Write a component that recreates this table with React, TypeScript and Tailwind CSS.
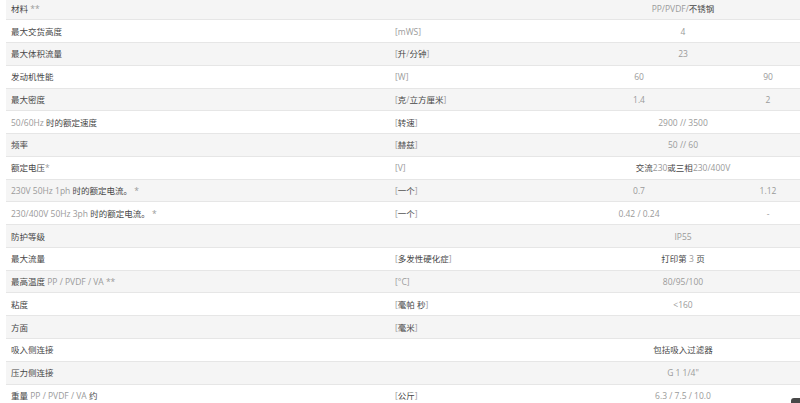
import React from "react";

type Row = { label: string; unit: string; a: string; b?: string; span?: boolean };

const rows: Row[] = [
  { label: "材料 **", unit: "", a: "PP/PVDF/不锈钢", span: true },
  { label: "最大交货高度", unit: "[mWS]", a: "4", span: true },
  { label: "最大体积流量", unit: "[升/分钟]", a: "23", span: true },
  { label: "发动机性能", unit: "[W]", a: "60", b: "90" },
  { label: "最大密度", unit: "[克/立方厘米]", a: "1.4", b: "2" },
  { label: "50/60Hz 时的额定速度", unit: "[转速]", a: "2900 // 3500", span: true },
  { label: "频率", unit: "[赫兹]", a: "50 // 60", span: true },
  { label: "额定电压*", unit: "[V]", a: "交流230或三相230/400V", span: true },
  { label: "230V 50Hz 1ph 时的额定电流。 *", unit: "[一个]", a: "0.7", b: "1.12" },
  { label: "230/400V 50Hz 3ph 时的额定电流。 *", unit: "[一个]", a: "0.42 / 0.24", b: "-" },
  { label: "防护等级", unit: "", a: "IP55", span: true },
  { label: "最大流量", unit: "[多发性硬化症]", a: "打印第 3 页", span: true },
  { label: "最高温度 PP / PVDF / VA **", unit: "[°C]", a: "80/95/100", span: true },
  { label: "粘度", unit: "[毫帕 秒]", a: "<160", span: true },
  { label: "方面", unit: "[毫米]", a: "", span: true },
  { label: "吸入侧连接", unit: "", a: "包括吸入过滤器", span: true },
  { label: "压力侧连接", unit: "", a: "G 1 1/4\"", span: true },
  { label: "重量 PP / PVDF / VA 约", unit: "[公斤]", a: "6.3 / 7.5 / 10.0", span: true },
];

function Mixed({ text }: { text: string }) {
  const parts: { s: string; cjk: boolean }[] = [];
  const re = /[\u3000-\u303f\u4e00-\u9fff\uff00-\uffef]/;
  for (const ch of Array.from(text)) {
    const cjk = re.test(ch);
    const last = parts[parts.length - 1];
    if (last && last.cjk === cjk) last.s += ch;
    else parts.push({ s: ch, cjk });
  }
  return (
    <>
      {parts.map((p, i) => (
        <span key={i} className={p.cjk ? "text-[#474747]" : "text-[#9a9a9a]"}>
          {p.s}
        </span>
      ))}
    </>
  );
}

export default function App() {
  return (
    <div
      className="relative w-[800px] h-[403px] overflow-hidden bg-white"
      style={{ fontFamily: '"Open Sans", "Noto Sans CJK SC", sans-serif' }}
    >
      <div className="ml-[6px] -mt-[2.5px] w-[806px] text-[8.5px] leading-none">
        {rows.map((r, i) => (
          <div
            key={i}
            className={`grid grid-cols-[384px_164px_170px_88px] items-center h-[22.78px] pt-[1.5px] border-b border-[#e6e6e6] ${
              i % 2 === 0 ? "bg-[#f5f5f5]" : "bg-white"
            }`}
          >
            <div className="px-[5px] whitespace-nowrap">
              <Mixed text={r.label} />
            </div>
            <div className="px-[5px] whitespace-nowrap">
              <Mixed text={r.unit} />
            </div>
            {r.span ? (
              <div className="col-span-2 text-center whitespace-nowrap">
                <Mixed text={r.a} />
              </div>
            ) : (
              <>
                <div className="text-center whitespace-nowrap">
                  <Mixed text={r.a} />
                </div>
                <div className="text-center whitespace-nowrap">
                  <Mixed text={r.b ?? ""} />
                </div>
              </>
            )}
          </div>
        ))}
      </div>
      <div className="absolute left-[791px] top-[398px] w-[30px] h-[30px] bg-[#484848] rounded-tl-[3px]" />
    </div>
  );
}
